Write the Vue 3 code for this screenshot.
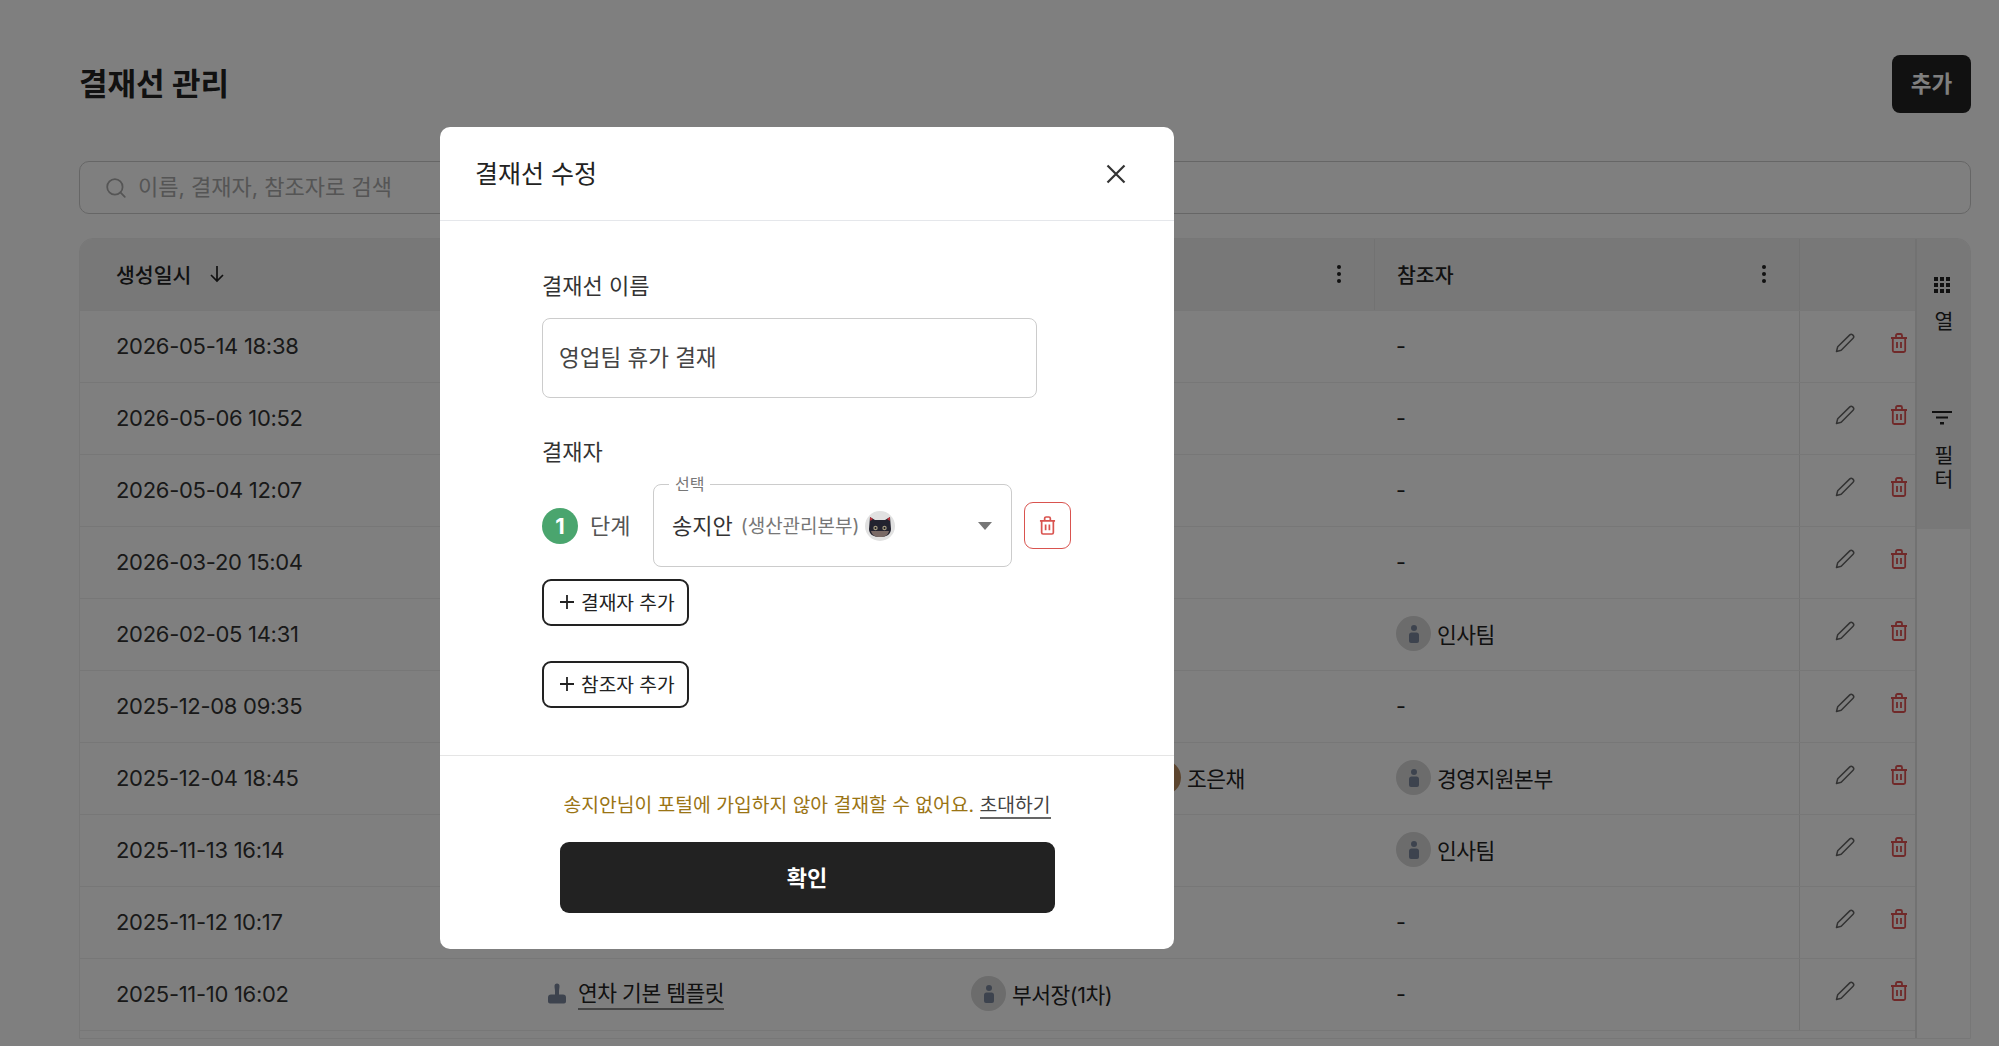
<script setup>
const rows = [
  { date: "2026-05-14 18:38", approvers: [], refs: [] },
  { date: "2026-05-06 10:52", approvers: [], refs: [] },
  { date: "2026-05-04 12:07", approvers: [], refs: [] },
  { date: "2026-03-20 15:04", approvers: [], refs: [] },
  { date: "2026-02-05 14:31", approvers: [], refs: ["인사팀"] },
  { date: "2025-12-08 09:35", approvers: [], refs: [] },
  { date: "2025-12-04 18:45", approvers: ["부서장(1차)", "조은채"], refs: ["경영지원본부"] },
  { date: "2025-11-13 16:14", approvers: [], refs: ["인사팀"] },
  { date: "2025-11-12 10:17", approvers: [], refs: [] },
  { date: "2025-11-10 16:02", name: "연차 기본 템플릿", approvers: ["부서장(1차)"], refs: [] },
];
</script>

<template>
  <div class="page">
    <header class="top">
      <h1>결재선 관리</h1>
      <button class="add">추가</button>
    </header>

    <div class="search">
      <svg viewBox="0 0 20 20" width="22" height="22" fill="none" stroke="#aaa" stroke-width="1.6">
        <circle cx="9" cy="9" r="7" />
        <path d="M14 14l4 4" stroke-linecap="round" />
      </svg>
      <input placeholder="이름, 결재자, 참조자로 검색" />
    </div>

    <div class="table">
      <div class="main">
        <div class="row head">
          <div class="cell first">
            생성일시
            <svg class="sort" viewBox="0 0 16 20" width="16" height="20" fill="none" stroke="#222" stroke-width="1.7">
              <path d="M8 2v15M2 11l6 6 6-6" />
            </svg>
          </div>
          <div class="cell"></div>
          <div class="cell line">
            <svg class="kebab" viewBox="0 0 4 18" width="4" height="18" fill="#222">
              <circle cx="2" cy="2" r="2" /><circle cx="2" cy="9" r="2" /><circle cx="2" cy="16" r="2" />
            </svg>
          </div>
          <div class="cell line">
            참조자
            <svg class="kebab" viewBox="0 0 4 18" width="4" height="18" fill="#222">
              <circle cx="2" cy="2" r="2" /><circle cx="2" cy="9" r="2" /><circle cx="2" cy="16" r="2" />
            </svg>
          </div>
          <div class="cell line"></div>
        </div>

        <div class="row" v-for="row in rows" :key="row.date">
          <div class="cell first">{{ row.date }}</div>
          <div class="cell template">
            <template v-if="row.name">
              <svg viewBox="0 0 20 20" width="20" height="21" fill="#7b879d">
                <path d="M7.500 2.500a2.500 2.500 0 0 1 5 0c0 2-.5 3.500-.5 5.500v3h4a3 3 0 0 1 3 3v4a2 2 0 0 1-2 2H3a2 2 0 0 1-2-2v-4a3 3 0 0 1 3-3h4V8c0-2-.5-3.500-.5-5.500z" />
              </svg>
              <span class="link">{{ row.name }}</span>
            </template>
          </div>
          <div class="cell chips">
            <span class="chip" v-for="person in row.approvers" :key="person">
              <span class="avatar" :class="{ photo: person === '조은채' }">
                <svg v-if="person !== '조은채'" viewBox="0 0 12 20" width="12" height="20" fill="#7b879d">
                  <circle cx="6" cy="4" r="3" />
                  <path d="M3.500 8.500h5c1.500 0 2.500 1 2.500 2.500v6a2 2 0 0 1-2 2H3a2 2 0 0 1-2-2v-6c0-1.500 1-2.500 2.500-2.500z" />
                </svg>
              </span>
              {{ person }}
            </span>
          </div>
          <div class="cell chips">
            <span class="chip" v-for="team in row.refs" :key="team">
              <span class="avatar">
                <svg viewBox="0 0 12 20" width="12" height="20" fill="#7b879d">
                  <circle cx="6" cy="4" r="3" />
                  <path d="M3.500 8.500h5c1.500 0 2.500 1 2.500 2.500v6a2 2 0 0 1-2 2H3a2 2 0 0 1-2-2v-6c0-1.500 1-2.500 2.500-2.500z" />
                </svg>
              </span>
              {{ team }}
            </span>
            <template v-if="!row.refs.length">-</template>
          </div>
          <div class="cell actions">
            <svg viewBox="0 0 20 20" width="20" height="20" fill="none" stroke="#666" stroke-width="1.500" stroke-linejoin="round">
              <path d="M1.500 18.500l1.200-4.700L14.800 1.900a2 2 0 0 1 2.800 0l.5.5a2 2 0 0 1 0 2.800L6.200 17.300z" />
            </svg>
            <svg viewBox="0 0 18 20" width="18" height="20" fill="none" stroke="#e05252" stroke-width="1.800">
              <path d="M1 5h16M6 5V2.500A1.500 1.500 0 0 1 7.500 1h3A1.500 1.500 0 0 1 12 2.500V5M2.800 5v12.500A1.500 1.500 0 0 0 4.300 19h9.400a1.500 1.500 0 0 0 1.500-1.500V5M7 9v6M11 9v6" />
            </svg>
          </div>
        </div>
      </div>

      <aside class="side">
        <div class="tools">
          <button>
            <svg viewBox="0 0 16 16" width="16" height="16" fill="#222">
              <rect x="0" y="0" width="4" height="4" /><rect x="6" y="0" width="4" height="4" /><rect x="12" y="0" width="4" height="4" />
              <rect x="0" y="6" width="4" height="4" /><rect x="6" y="6" width="4" height="4" /><rect x="12" y="6" width="4" height="4" />
              <rect x="0" y="12" width="4" height="4" /><rect x="6" y="12" width="4" height="4" /><rect x="12" y="12" width="4" height="4" />
            </svg>
            <span>열</span>
          </button>
          <button class="filter">
            <svg viewBox="0 0 20 14" width="20" height="14" fill="#222">
              <rect x="0" y="0" width="20" height="2" /><rect x="4" y="5.500" width="12" height="2" /><rect x="8" y="11" width="4" height="2.500" />
            </svg>
            <span>필터</span>
          </button>
        </div>
      </aside>
    </div>
  </div>

  <div class="overlay">
    <section class="modal">
      <div class="modal-head">
        <h2>결재선 수정</h2>
        <svg viewBox="0 0 20 20" width="20" height="20" fill="none" stroke="#333" stroke-width="2.200">
          <path d="M1.500 1.500l17 17M18.500 1.500l-17 17" />
        </svg>
      </div>

      <div class="modal-body">
        <label class="field-label">결재선 이름</label>
        <input class="name" value="영업팀 휴가 결재" />

        <label class="field-label second">결재자</label>
        <div class="approver">
          <span class="step">1</span>
          <span class="step-text">단계</span>
          <div class="select">
            <span class="legend">선택</span>
            <span class="person">송지안</span>
            <span class="dept">(생산관리본부)</span>
            <svg class="cat" viewBox="0 0 30 30" width="30" height="30">
              <circle cx="15" cy="15" r="15" fill="#e1e1e1" />
              <path d="M5 6l5 3h10l5-3 1 12c0 5-4 8-11 8S4 23 4 18z" fill="#23232f" />
              <path d="M5 6l3 2-2.700 2zM25 6l-3 2 2.700 2z" fill="#c0313a" />
              <path d="M6 20h18c-1 4-4 6-9 6s-8-2-9-6z" fill="#7a6a66" />
              <circle cx="10.500" cy="17" r="2.200" fill="#a39a80" />
              <circle cx="19.500" cy="17" r="2.200" fill="#a39a80" />
              <circle cx="10.500" cy="17" r="1" fill="#15151c" />
              <circle cx="19.500" cy="17" r="1" fill="#15151c" />
            </svg>
            <span class="caret"></span>
          </div>
          <button class="remove">
            <svg viewBox="0 0 18 20" width="17" height="19" fill="none" stroke="#d9534f" stroke-width="1.800">
              <path d="M1 5h16M6 5V2.500A1.500 1.500 0 0 1 7.500 1h3A1.500 1.500 0 0 1 12 2.500V5M2.800 5v12.500A1.500 1.500 0 0 0 4.300 19h9.400a1.500 1.500 0 0 0 1.500-1.500V5M7 9v6M11 9v6" />
            </svg>
          </button>
        </div>
        <button class="outline">
          <svg viewBox="0 0 14 14" width="14" height="14" stroke="#222" stroke-width="1.800"><path d="M7 0v14M0 7h14" /></svg>
          결재자 추가
        </button>
        <button class="outline second-btn">
          <svg viewBox="0 0 14 14" width="14" height="14" stroke="#222" stroke-width="1.800"><path d="M7 0v14M0 7h14" /></svg>
          참조자 추가
        </button>
      </div>

      <div class="modal-foot">
        <p class="warn">송지안님이 포털에 가입하지 않아 결재할 수 없어요. <a>초대하기</a></p>
        <button class="confirm">확인</button>
      </div>
    </section>
  </div>
</template>

<style scoped>
.page {
  height: 1046px;
  box-sizing: border-box;
  padding: 55px 28px 0 79px;
  overflow: hidden;
  color: #222;
}

.top {
  display: flex;
  justify-content: space-between;
  align-items: center;
}

h1 {
  margin: 0;
  padding-bottom: 5px;
  font-size: 31px;
  font-weight: 700;
}

.add {
  width: 79px;
  height: 58px;
  padding: 0 0 4px;
  border: none;
  border-radius: 8px;
  background: #222;
  color: #fff;
  font: 600 22.500px Inter, "Noto Sans CJK KR", sans-serif;
}

.search {
  display: flex;
  align-items: center;
  gap: 11px;
  height: 53px;
  box-sizing: border-box;
  margin-top: 48px;
  padding-left: 25px;
  border: 1px solid #ccc;
  border-radius: 10px;
}

.search input {
  flex: 1;
  padding: 0 0 2px;
  border: none;
  outline: none;
  background: none;
  font: 22px Inter, "Noto Sans CJK KR", sans-serif;
}

.search input::placeholder {
  color: #aaa;
}

.table {
  display: flex;
  margin-top: 24px;
  height: 801px;
  box-sizing: border-box;
  border: 1px solid #eee;
  border-radius: 14px 14px 0 0;
  overflow: hidden;
}

.main {
  flex: 1;
  border-bottom: 1px solid #eee;
  padding-bottom: 8px;
  height: 800px;
  box-sizing: border-box;
}

.row {
  display: grid;
  grid-template-columns: 445px 424px 425px 425px 1fr;
  height: 72px;
  box-sizing: border-box;
  border-bottom: 1px solid #eee;
  font-size: 21.500px;
  letter-spacing: -0.5px;
}

.head {
  background: #f0f0f0;
  font-size: 20.500px;
  font-weight: 500;
  letter-spacing: 0;
}

.cell {
  display: flex;
  align-items: center;
  padding-left: 22px;
  padding-bottom: 2px;
  min-width: 0;
  white-space: nowrap;
}

.first {
  padding-left: 36px;
  color: #333;
  font-size: 22px;
  letter-spacing: -0.3px;
}

.head .first {
  color: #222;
  font-size: 20.500px;
  letter-spacing: 0;
}

.line {
  border-left: 1px solid #e4e4e4;
}

.sort {
  margin-left: 18px;
}

.kebab {
  margin-left: auto;
  margin-right: 33px;
}

.template {
  gap: 11px;
}

.link {
  border-bottom: 2px solid #888;
  line-height: 30px;
}

.chips {
  gap: 34px;
}

.chip {
  display: flex;
  align-items: center;
  gap: 6px;
}

.avatar {
  display: flex;
  align-items: center;
  justify-content: center;
  width: 35px;
  height: 35px;
  border-radius: 50%;
  background: #d8d8d8;
}

.avatar.photo {
  background: #b98a5e;
}

.actions {
  gap: 35px;
  padding-left: 35px;
  padding-bottom: 8px;
  border-left: 1px solid #e4e4e4;
}

.side {
  width: 55px;
  flex-shrink: 0;
  box-sizing: border-box;
  border-left: 2px solid #e4e4e4;
  height: 800px;
  border-bottom: 1px solid #eee;
}

.tools {
  display: flex;
  flex-direction: column;
  align-items: center;
  height: 290px;
  box-sizing: border-box;
  padding: 38px 3px 0 0;
  background: #f0f0f0;
}

.tools button {
  display: flex;
  flex-direction: column;
  align-items: center;
  gap: 18px;
  padding: 0;
  border: none;
  background: none;
  color: #222;
  font: 20.500px Inter, "Noto Sans CJK KR", sans-serif;
}

.tools .filter {
  gap: 20px;
  margin-top: 76px;
}

.tools button span {
  writing-mode: vertical-rl;
  letter-spacing: 3px;
}

.overlay {
  position: fixed;
  inset: 0;
  box-sizing: border-box;
  padding: 127px 0 0 440px;
  background: rgba(0, 0, 0, 0.5);
}

.modal {
  width: 734px;
  border-radius: 10px;
  background: #fff;
  color: #222;
}

.modal-head {
  display: flex;
  justify-content: space-between;
  align-items: center;
  height: 94px;
  box-sizing: border-box;
  padding: 0 48px 0 35px;
  border-bottom: 1px solid #e5e7eb;
}

h2 {
  margin: 0;
  padding-bottom: 4px;
  font-size: 25px;
  font-weight: 400;
}

.modal-body {
  display: flex;
  flex-direction: column;
  align-items: flex-start;
  padding: 50px 0 47px 102px;
}

.field-label {
  font-size: 22px;
  line-height: 30px;
  color: #333;
}

.name {
  width: 495px;
  height: 80px;
  box-sizing: border-box;
  margin-top: 17px;
  padding: 0 16px 4px;
  border: 1px solid #ccc;
  border-radius: 8px;
  outline: none;
  color: #444;
  font: 22.500px Inter, "Noto Sans CJK KR", sans-serif;
}

.second {
  margin-top: 39px;
}

.approver {
  display: flex;
  align-items: center;
  margin-top: 17px;
}

.step {
  display: flex;
  align-items: center;
  justify-content: center;
  width: 36px;
  height: 36px;
  border-radius: 50%;
  background: #4aa56e;
  color: #fff;
  font-size: 22px;
  font-weight: 700;
}

.step-text {
  width: 63px;
  margin-left: 12px;
  padding-bottom: 4px;
  font-size: 22px;
  color: #555;
}

.select {
  position: relative;
  display: flex;
  align-items: center;
  width: 359px;
  height: 83px;
  box-sizing: border-box;
  padding: 0 18px;
  border: 1px solid #ccc;
  border-radius: 8px;
}

.legend {
  position: absolute;
  top: -12px;
  left: 15px;
  padding: 0 6px;
  background: #fff;
  color: #777;
  font-size: 16px;
  line-height: 22px;
}

.person {
  padding-bottom: 4px;
  font-size: 22px;
  color: #333;
}

.dept {
  margin-left: 8px;
  padding-bottom: 3px;
  font-size: 19px;
  color: #777;
}

.cat {
  margin-left: 6px;
}

.caret {
  margin-left: auto;
  margin-right: 1px;
  border-left: 7.500px solid transparent;
  border-right: 7.500px solid transparent;
  border-top: 8px solid #777;
}

.remove {
  display: flex;
  align-items: center;
  justify-content: center;
  width: 47px;
  height: 47px;
  margin-left: 12px;
  padding: 0;
  border: 1px solid #d9534f;
  border-radius: 9px;
  background: #fff;
}

.outline {
  display: flex;
  align-items: center;
  gap: 7px;
  width: 147px;
  height: 47px;
  margin-top: 12px;
  padding: 0 0 2px 16px;
  border: 2px solid #222;
  border-radius: 9px;
  background: #fff;
  color: #222;
  font: 400 19.200px Inter, "Noto Sans CJK KR", sans-serif;
}

.second-btn {
  margin-top: 35px;
}

.modal-foot {
  display: flex;
  flex-direction: column;
  align-items: center;
  padding: 34px 0 36px;
  border-top: 1px solid #e5e5e5;
}

.warn {
  margin: 0;
  font-size: 19.300px;
  line-height: 30px;
  color: #9a7414;
}

.warn a {
  color: #444;
  border-bottom: 2px solid #666;
}

.confirm {
  width: 495px;
  height: 71px;
  margin-top: 22px;
  padding: 0 0 4px;
  border: none;
  border-radius: 9px;
  background: #222;
  color: #fff;
  font: 700 22px Inter, "Noto Sans CJK KR", sans-serif;
}
</style>

<style>
html,
body {
  margin: 0;
  overflow: hidden;
  background: #fff;
  font-family: Inter, "Noto Sans CJK KR", sans-serif;
}
</style>
